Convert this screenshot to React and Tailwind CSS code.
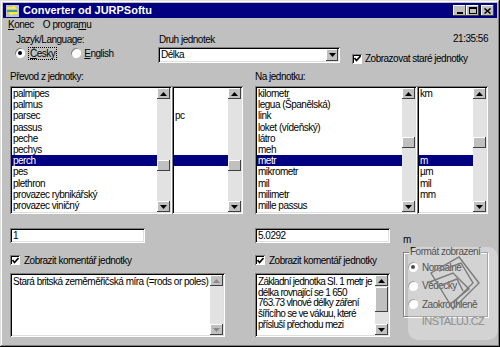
import React from "react";

const raised = "bg-[#c0c0c0] shadow-[inset_-1px_-1px_#404040,inset_1px_1px_#ffffff]";
const sunken =
  "bg-white p-[2px] shadow-[inset_1px_1px_#808080,inset_-1px_-1px_#ffffff,inset_2px_2px_#000000,inset_-2px_-2px_#dfdfdf]";

const leftUnits = [
  "palmipes",
  "palmus",
  "parsec",
  "passus",
  "peche",
  "pechys",
  "perch",
  "pes",
  "plethron",
  "provazec rybnikářský",
  "provazec viničný",
  "provazec zeměměřičský",
];
const leftSymbols = ["", "", "pc", "", "", "", "", "", "", "", "", ""];

const rightUnits = [
  "kilometr",
  "legua (Španělská)",
  "link",
  "loket (vídeňský)",
  "látro",
  "meh",
  "metr",
  "mikrometr",
  "mil",
  "milimetr",
  "mille passus",
  "míle",
];
const rightSymbols = ["km", "", "", "", "", "", "m", "µm", "mil", "mm", "", ""];

const comment = [
  "Základní jednotka SI. 1 metr je",
  "délka rovnající se 1 650",
  "763.73 vlnové délky záření",
  "šířícího se ve vákuu, které",
  "přísluší přechodu mezi",
];

// small black triangle used on scroll buttons and the combo box
const Tri = ({ up, color = "#000000" }) => (
  <svg width="7" height="4" viewBox="0 0 7 4">
    <polygon points={up ? "3.5,0 7,4 0,4" : "0,0 7,0 3.5,4"} fill={color} />
  </svg>
);

const ScrollBar = ({ spacer, thumb = "h-[11px]", disabled }) => (
  <div className="flex flex-col w-[13px] h-full bg-[#e2e2e2] shrink-0">
    <div className={`${raised} h-[11px] shrink-0 flex items-center justify-center`}>
      <Tri up color={disabled ? "#8a8a8a" : "#000000"} />
    </div>
    {spacer && (
      <>
        <div className={`${spacer} shrink-0`} />
        <div className={`${raised} ${thumb} shrink-0`} />
      </>
    )}
    <div className="flex-1" />
    <div className={`${raised} h-[11px] shrink-0 flex items-center justify-center`}>
      <Tri color={disabled ? "#8a8a8a" : "#000000"} />
    </div>
  </div>
);

const ListBox = ({ items, selected, width, spacer }) => (
  <div className={`${sunken} ${width} h-[128px] flex`}>
    <div className="flex-1 overflow-hidden">
      {items.map((t, i) => (
        <div
          key={i}
          className={`h-[11.2px] leading-[11.2px] pl-[1px] whitespace-nowrap ${
            i === selected ? "bg-[#000080] text-white" : ""
          }`}
        >
          {t}
        </div>
      ))}
    </div>
    <ScrollBar spacer={spacer} />
  </div>
);

const Radio = ({ checked }) => (
  <div className="w-[10px] h-[10px] rounded-full bg-white shrink-0 flex items-center justify-center shadow-[inset_1px_1px_#808080,inset_-1px_-1px_#ffffff]">
    {checked && <div className="w-[4px] h-[4px] rounded-full bg-black" />}
  </div>
);

const Check = () => (
  <div className="w-[10px] h-[10px] bg-white shrink-0 flex items-center justify-center shadow-[inset_1px_1px_#808080,inset_-1px_-1px_#ffffff,inset_2px_2px_#000000]">
    <svg width="7" height="7" viewBox="0 0 7 7">
      <polyline points="0.5,3 2.5,5.5 6.5,1" fill="none" stroke="#000" strokeWidth="1.6" />
    </svg>
  </div>
);

const App = () => {
  return (
    <div className="relative w-[500px] h-[347px] overflow-hidden bg-[#c0c0c0] text-black text-[10px] tracking-[-0.5px] font-['Liberation_Sans',Arial,sans-serif] shadow-[inset_-1px_-1px_#000000,inset_1px_1px_#dfdfdf,inset_-2px_-2px_#808080,inset_2px_2px_#ffffff]">
      {/* title bar */}
      <div className="mx-[3px] mt-[3px] h-[15px] bg-[#000080] flex items-center">
        <svg width="13" height="12" viewBox="0 0 13 12" className="ml-[3px]">
          <rect x="0" y="0" width="13" height="12" fill="#c0c0c0" />
          <path d="M1 3h8l-2-2M12 8H4l2 2" fill="none" stroke="#ffff00" strokeWidth="1.5" />
          <path d="M1 6h10" stroke="#008080" strokeWidth="1.2" />
        </svg>
        <span className="ml-[4px] text-white font-bold text-[11px] tracking-[0px]">Converter od JURPSoftu</span>
        <div className="ml-auto mr-[3px] flex items-center">
          <div className={`${raised} w-[13px] h-[11px] flex items-end justify-center pb-[2px]`}>
            <div className="w-[6px] h-[2px] bg-black" />
          </div>
          <div className={`${raised} w-[13px] h-[11px] flex items-center justify-center`}>
            <div className="w-[8px] h-[7px] border border-black border-t-2" />
          </div>
          <div className={`${raised} ml-[2px] w-[13px] h-[11px] flex items-center justify-center`}>
            <svg width="7" height="6" viewBox="0 0 7 6">
              <path d="M0.5 0.5L6.5 5.5M6.5 0.5L0.5 5.5" stroke="#000" strokeWidth="1.5" />
            </svg>
          </div>
        </div>
      </div>

      {/* menu */}
      <div className="h-[13px] leading-[13px] flex">
        <span className="ml-[8px]">
          <span className="underline">K</span>onec
        </span>
        <span className="ml-[9px]">
          O progra<span className="underline">m</span>u
        </span>
      </div>

      {/* top controls */}
      <div className="h-[40px] flex items-start">
        <div className="ml-[16px] w-[142px] shrink-0 pt-[3px]">
          <div className="leading-[12px]">Jazyk/Language:</div>
          <div className="mt-[2px] h-[10px] flex items-center">
            <div className="-ml-[1px]">
              <Radio checked />
            </div>
            <span className="ml-[3px] leading-[11px] border border-dotted border-black px-[1px]">
              <span className="underline">Č</span>esky
            </span>
            <div className="ml-[14px]">
              <Radio />
            </div>
            <span className="ml-[3px] leading-[11px]">
              <span className="underline">E</span>nglish
            </span>
          </div>
        </div>
        <div className="w-[182px] shrink-0 pt-[3px]">
          <div className="leading-[12px] pl-[1px]">Druh jednotek</div>
          <div className={`${sunken} mt-[1px] h-[16px] flex items-center`}>
            <span className="pl-[1px] flex-1 leading-[12px]">Délka</span>
            <div className={`${raised} w-[12px] h-full flex items-center justify-center`}>
              <Tri />
            </div>
          </div>
        </div>
        <div className="ml-[12px] mr-[12px] flex-1 flex flex-col pt-[2px]">
          <div className="leading-[12px] text-right whitespace-nowrap">21:35:56</div>
          <div className="mt-[8px] flex items-center">
            <Check />
            <span className="ml-[3px] leading-[11px] whitespace-nowrap">Zobrazovat staré jednotky</span>
          </div>
        </div>
      </div>

      {/* converter columns */}
      <div className="flex">
        <div className="ml-[10px] w-[233px]">
          <div className="h-[15px] leading-[12px]">Převod z jednotky:</div>
          <div className="flex">
            <ListBox items={leftUnits} selected={6} width="w-[162px]" spacer="h-[61px]" />
            <ListBox items={leftSymbols} selected={6} width="w-[71px]" spacer="h-[61px]" />
          </div>
          <div className={`${sunken} mt-[14px] w-[135px] h-[15px] leading-[11px] pl-[3px]`}>1</div>
          <div className="mt-[12px] h-[10px] flex items-center">
            <Check />
            <span className="ml-[4px] leading-[11px]">Zobrazit komentář jednotky</span>
          </div>
          <div className={`${sunken} mt-[8px] w-[215px] h-[64px] flex`}>
            <div className="flex-1 pl-[1px] pt-[2px] leading-[10.7px] whitespace-nowrap overflow-hidden">
              Stará britská zeměměřičská míra (=rods or poles)
            </div>
            <ScrollBar disabled />
          </div>
        </div>

        <div className="ml-[12px] w-[245px]">
          <div className="h-[15px] leading-[12px]">Na jednotku:</div>
          <div className="flex">
            <ListBox items={rightUnits} selected={6} width="w-[162px]" spacer="h-[38px]" />
            <ListBox items={rightSymbols} selected={6} width="w-[71px]" spacer="h-[38px]" />
          </div>
          <div className="mt-[14px] flex items-end">
            <div className={`${sunken} w-[135px] h-[15px] leading-[11px] pl-[3px]`}>5.0292</div>
            <span className="ml-[13px] leading-[11px] -mb-[2px]">m</span>
          </div>
          <div className="flex items-start">
            <div className="w-[135px]">
              <div className="mt-[12px] h-[10px] flex items-center">
                <Check />
                <span className="ml-[4px] leading-[11px]">Zobrazit komentář jednotky</span>
              </div>
              <div className={`${sunken} mt-[8px] h-[64px] flex`}>
                <div className="flex-1 pl-[1px] pt-[2px] leading-[10.7px] tracking-[-0.7px] whitespace-nowrap overflow-hidden">
                  {comment.map((l) => (
                    <div key={l}>{l}</div>
                  ))}
                </div>
                <ScrollBar spacer="h-[1px]" thumb="h-[25px]" />
              </div>
            </div>
            <div className="relative ml-[13px] mt-[9px] w-[85px] h-[65px] border border-[#808080] shadow-[1px_1px_#ffffff,inset_1px_1px_#ffffff]">
              <span className="absolute -top-[7px] left-[5px] px-[1px] bg-[#c0c0c0] leading-[12px] whitespace-nowrap">Formát zobrazení</span>
              <div className="mt-[9px] ml-[4px] flex flex-col gap-[8.5px]">
                <div className="flex items-center h-[10px]">
                  <Radio checked />
                  <span className="ml-[4px] leading-[11px]">Normálně</span>
                </div>
                <div className="flex items-center h-[10px]">
                  <Radio />
                  <span className="ml-[4px] leading-[11px]">Vědecky</span>
                </div>
                <div className="flex items-center h-[10px]">
                  <Radio />
                  <span className="ml-[4px] leading-[11px]">Zaokrouhleně</span>
                </div>
              </div>
            </div>
          </div>
        </div>
      </div>

      {/* site watermark lying over the window */}
      <div className="absolute left-[408px] top-[247px] w-[90px] h-[93px] rounded-[10px] bg-white/30 flex flex-col items-center">
        <svg width="60" height="60" viewBox="0 0 60 60" className="mt-[6px]">
          <g fill="none" stroke="#7a7a7a" strokeWidth="1.4">
            <path d="M8 20 L36 4 L56 30 L30 56 Z" />
            <path d="M16 18 L38 10 L50 30 L30 50" />
            <path d="M4 30 L30 20 L46 36 L26 52" />
            <path d="M14 34 L34 26 L40 38" />
          </g>
        </svg>
        <span className="mt-[2px] text-[11px] tracking-[-0.6px] text-[#8e8e8e] leading-[12px]">INSTALUJ.CZ</span>
      </div>
    </div>
  );
};

export default App;
